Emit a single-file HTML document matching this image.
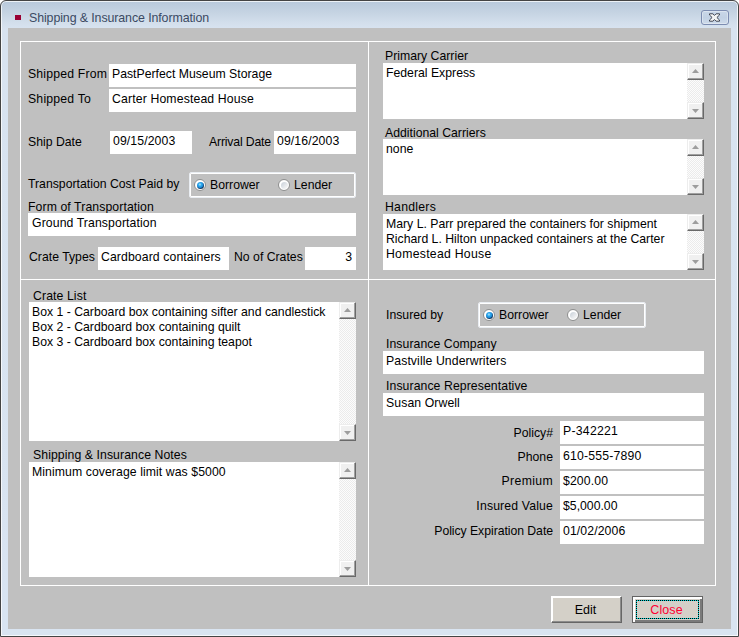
<!DOCTYPE html>
<html>
<head>
<meta charset="utf-8">
<title>Shipping &amp; Insurance Information</title>
<style>
html,body{margin:0;padding:0;background:#fff;}
body{width:739px;height:637px;position:relative;overflow:hidden;font-family:"Liberation Sans",sans-serif;font-size:12.25px;color:#000;}
#win{position:absolute;left:0;top:0;width:737px;height:635px;border:1px solid #444;border-radius:6px 6px 0 0;
 background:linear-gradient(to bottom,#b8c9db 0px,#c6d4e3 12px,#d3dfec 22px,#d8e3f0 28px,#d9e4f1 100%);box-shadow:inset 0 0 0 1px rgba(255,255,255,.75);}
#client{position:absolute;left:8px;top:28px;width:723px;height:601px;background:#c0c0c0;}
#icon{position:absolute;left:15px;top:15px;width:6px;height:5px;background:#990033;}
#title{position:absolute;left:29px;top:11px;font-size:12.4px;color:#3b4a63;white-space:nowrap;letter-spacing:-0.1px;}
#xbtn{position:absolute;left:701px;top:10px;width:26px;height:13px;border:1px solid #7c8cb1;border-radius:3px;background:linear-gradient(to bottom,#c9d7e8,#c2d1e4 50%,#cddaea);box-shadow:inset 0 0 0 1px rgba(255,255,255,.35);}
.a{position:absolute;white-space:nowrap;}
.l{position:absolute;white-space:nowrap;line-height:14px;height:14px;}
.f{position:absolute;background:#fff;white-space:nowrap;overflow:hidden;}
.f span{position:absolute;left:3px;top:3px;line-height:14px;}
.m{position:absolute;background:#fff;overflow:hidden;}
.m div.t{position:absolute;left:3px;top:3px;line-height:15px;white-space:nowrap;}
.wl{position:absolute;background:#fff;}
.sb{position:absolute;right:0;top:0;width:17px;height:100%;background:#fcfcfc;
 background-image:linear-gradient(45deg,#ebebeb 25%,transparent 25%,transparent 75%,#ebebeb 75%),linear-gradient(45deg,#ebebeb 25%,transparent 25%,transparent 75%,#ebebeb 75%);background-size:2px 2px;background-position:0 0,1px 1px;}
.ar{position:absolute;left:0;width:15px;height:15px;background:#f0f0f0;border-top:1px solid #ededed;border-left:1px solid #ededed;border-right:1px solid #696969;border-bottom:1px solid #696969;box-shadow:inset -1px -1px 0 #a0a0a0, inset 1px 1px 0 #fff;}
.ar.u{top:0;}
.ar.d{bottom:0;}
.ar i{position:absolute;left:4px;width:7px;height:4px;background:#9d9d9d;filter:drop-shadow(1px 1px 0 #fff);}
.ar.u i{top:5px;clip-path:polygon(50% 0,100% 100%,0 100%);}
.ar.d i{top:6px;clip-path:polygon(0 0,100% 0,50% 100%);}
.rg{position:absolute;border:1px solid #e9edf2;border-radius:2px;box-sizing:border-box;box-shadow:inset 0 0 0 1px #fff;}
.rb{position:absolute;width:12px;height:12px;border-radius:50%;box-sizing:border-box;border:1px solid #8c8d8d;background:#fff;}
.rb:after{content:"";position:absolute;left:1.5px;top:1.5px;width:7px;height:7px;border-radius:50%;background:linear-gradient(135deg,#ccd3db 10%,#f6f6f6 85%);}
.rb.on:after{background:radial-gradient(circle at 42% 36%,#b4e8fb 0,#2aa6ec 28%,#1b8bd8 50%,#10406f 64%,#0d2b50 82%);}
.btn{position:absolute;box-sizing:border-box;background:#d4d0c8;text-align:center;font-size:12.5px;}
</style>
</head>
<body>
<div id="win"></div>
<div id="icon"></div>
<div id="title">Shipping &amp; Insurance Information</div>
<div id="xbtn">
<svg width="26" height="13" viewBox="0 0 26 13" style="position:absolute;left:0;top:0"><path d="M7.5 2.8 L10.9 2.8 L12.5 4.4 L14.1 2.8 L17.5 2.8 L17.5 4 L14.9 6.5 L17.5 9 L17.5 10.2 L14.1 10.2 L12.5 8.6 L10.9 10.2 L7.5 10.2 L7.5 9 L10.1 6.5 L7.5 4 Z" fill="#f4f4f4" stroke="#3f4452" stroke-width="1" stroke-linejoin="round"/></svg>
</div>
<div id="client"></div>

<!-- inner frame lines -->
<div class="wl" style="left:20px;top:41px;width:696px;height:1px"></div>
<div class="wl" style="left:20px;top:585px;width:696px;height:1px"></div>
<div class="wl" style="left:20px;top:41px;width:1px;height:545px"></div>
<div class="wl" style="left:715px;top:41px;width:1px;height:545px"></div>
<div class="wl" style="left:368px;top:41px;width:1px;height:545px"></div>
<div class="wl" style="left:20px;top:279px;width:696px;height:1px"></div>

<!-- top-left -->
<div class="l" style="left:28px;top:67px;letter-spacing:0.18px">Shipped From</div>
<div class="f" style="left:109px;top:64px;width:247px;height:23px"><span>PastPerfect Museum Storage</span></div>
<div class="l" style="left:28px;top:92px;letter-spacing:0.2px">Shipped To</div>
<div class="f" style="left:109px;top:89px;width:247px;height:23px"><span style="letter-spacing:0.14px">Carter Homestead House</span></div>

<div class="l" style="left:28px;top:135px">Ship Date</div>
<div class="f" style="left:110px;top:131px;width:82px;height:23px"><span style="letter-spacing:0.1px">09/15/2003</span></div>
<div class="l" style="left:209px;top:135px;letter-spacing:-0.17px">Arrival Date</div>
<div class="f" style="left:274px;top:131px;width:82px;height:23px"><span style="letter-spacing:0.1px">09/16/2003</span></div>

<div class="l" style="left:28px;top:177px">Transportation Cost Paid by</div>
<div class="rg" style="left:189px;top:172px;width:167px;height:26px"></div>
<div class="rb on" style="left:194px;top:179px"></div>
<div class="l" style="left:210px;top:178px">Borrower</div>
<div class="rb" style="left:278px;top:179px"></div>
<div class="l" style="left:294px;top:178px">Lender</div>

<div class="l" style="left:28px;top:200px;letter-spacing:0.09px">Form of Transportation</div>
<div class="f" style="left:28px;top:213px;width:328px;height:23px"><span style="left:4px;letter-spacing:0.1px">Ground Transportation</span></div>

<div class="l" style="left:29px;top:250px">Crate Types</div>
<div class="f" style="left:98px;top:247px;width:131px;height:23px"><span style="letter-spacing:0.1px">Cardboard containers</span></div>
<div class="l" style="left:234px;top:250px">No of Crates</div>
<div class="f" style="left:305px;top:247px;width:51px;height:23px"><span style="left:auto;right:4px">3</span></div>

<!-- bottom-left -->
<div class="l" style="left:33px;top:289px;letter-spacing:0.1px">Crate List</div>
<div class="m" style="left:29px;top:302px;width:327px;height:139px">
 <div class="t">Box 1 - Carboard box containing sifter and candlestick<br>Box 2 - Cardboard box containing quilt<br>Box 3 - Cardboard box containing teapot</div>
 <div class="sb"><div class="ar u"><i></i></div><div class="ar d"><i></i></div></div>
</div>
<div class="l" style="left:33px;top:448px;letter-spacing:0.08px">Shipping &amp; Insurance Notes</div>
<div class="m" style="left:29px;top:462px;width:327px;height:115px">
 <div class="t" style="letter-spacing:0.075px">Minimum coverage limit was $5000</div>
 <div class="sb"><div class="ar u"><i></i></div><div class="ar d"><i></i></div></div>
</div>

<!-- top-right -->
<div class="l" style="left:385px;top:49px">Primary Carrier</div>
<div class="m" style="left:383px;top:63px;width:321px;height:56px">
 <div class="t">Federal Express</div>
 <div class="sb"><div class="ar u"><i></i></div><div class="ar d"><i></i></div></div>
</div>
<div class="l" style="left:385px;top:126px">Additional Carriers</div>
<div class="m" style="left:383px;top:139px;width:321px;height:56px">
 <div class="t">none</div>
 <div class="sb"><div class="ar u"><i></i></div><div class="ar d"><i></i></div></div>
</div>
<div class="l" style="left:385px;top:200px;letter-spacing:0.25px">Handlers</div>
<div class="m" style="left:383px;top:214px;width:321px;height:56px">
 <div class="t">Mary L. Parr prepared the containers for shipment<br>Richard L. Hilton unpacked containers at the Carter<br><span style="letter-spacing:0.27px">Homestead House</span></div>
 <div class="sb"><div class="ar u"><i></i></div><div class="ar d"><i></i></div></div>
</div>

<!-- bottom-right -->
<div class="l" style="left:386px;top:308px">Insured by</div>
<div class="rg" style="left:478px;top:302px;width:168px;height:26px"></div>
<div class="rb on" style="left:483px;top:309px"></div>
<div class="l" style="left:499px;top:308px">Borrower</div>
<div class="rb" style="left:567px;top:309px"></div>
<div class="l" style="left:583px;top:308px">Lender</div>

<div class="l" style="left:386px;top:337px;letter-spacing:0.06px">Insurance Company</div>
<div class="f" style="left:383px;top:351px;width:321px;height:23px"><span style="letter-spacing:0.09px">Pastville Underwriters</span></div>
<div class="l" style="left:386px;top:379px;letter-spacing:0.08px">Insurance Representative</div>
<div class="f" style="left:383px;top:393px;width:321px;height:23px"><span style="letter-spacing:0.09px">Susan Orwell</span></div>

<div class="l" style="right:186px;top:426px">Policy#</div>
<div class="f" style="left:560px;top:421px;width:144px;height:23px"><span style="letter-spacing:0.25px">P-342221</span></div>
<div class="l" style="right:186px;top:450px">Phone</div>
<div class="f" style="left:560px;top:446px;width:144px;height:23px"><span style="letter-spacing:0.18px">610-555-7890</span></div>
<div class="l" style="right:186px;top:474px;letter-spacing:0.35px">Premium</div>
<div class="f" style="left:560px;top:471px;width:144px;height:23px"><span style="letter-spacing:0.12px">$200.00</span></div>
<div class="l" style="right:186px;top:499px;letter-spacing:0.15px">Insured Value</div>
<div class="f" style="left:560px;top:496px;width:144px;height:23px"><span>$5,000.00</span></div>
<div class="l" style="right:186px;top:524px;letter-spacing:-0.05px">Policy Expiration Date</div>
<div class="f" style="left:560px;top:521px;width:144px;height:23px"><span style="letter-spacing:0.1px">01/02/2006</span></div>

<!-- buttons -->
<div class="btn" style="left:551px;top:596px;width:71px;height:27px;border-top:1px solid #fff;border-left:1px solid #fff;border-right:1px solid #666;border-bottom:1px solid #666;box-shadow:inset -1px -1px 0 #8c8c8c,inset 1px 1px 0 #fff;line-height:27px"><span style="position:relative;left:-1px">Edit</span></div>
<div class="btn" style="left:632px;top:596px;width:71px;height:27px;border:1px solid #646464;box-shadow:inset 2px 2px 0 #fff,inset -2px -2px 0 #7a7a7a;line-height:27px;color:#ff0033"><span style="position:relative;left:-1px;letter-spacing:0.1px">Close</span>
 <div style="position:absolute;left:3px;top:3px;width:61px;height:17px;border:1px solid #00d8d8;"></div>
 <div style="position:absolute;left:3px;top:3px;width:61px;height:17px;border:1px dotted #000;"></div>
</div>
</body>
</html>
